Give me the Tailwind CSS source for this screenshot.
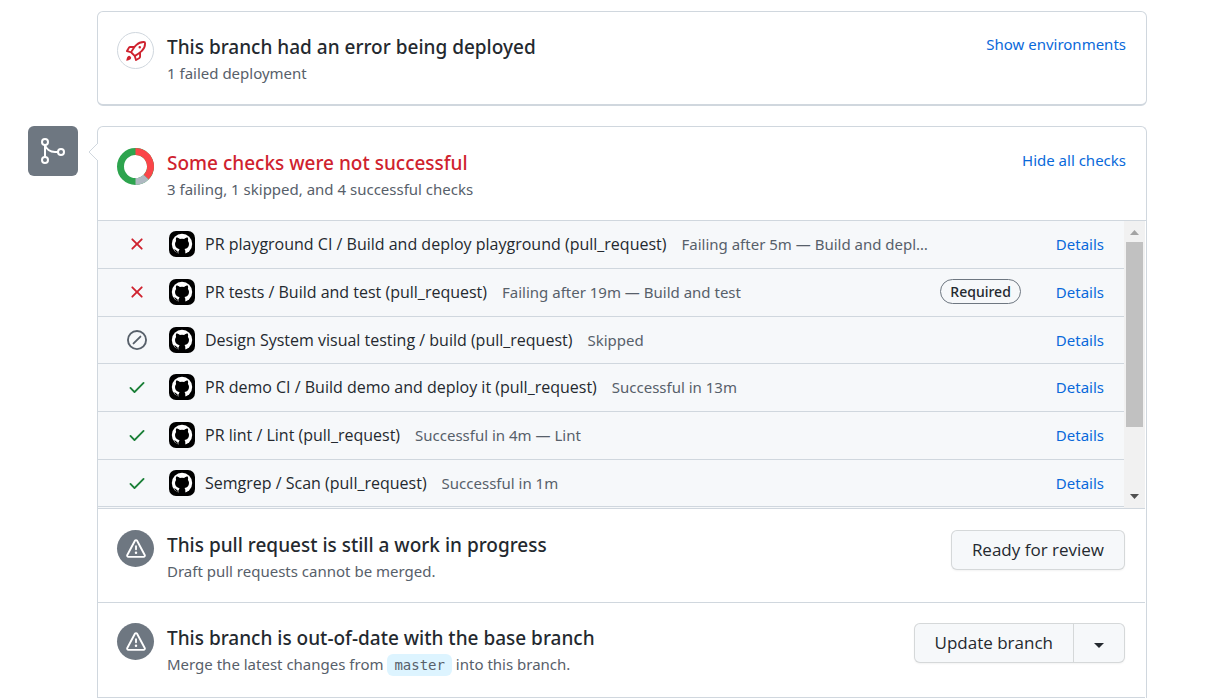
<!DOCTYPE html>
<html lang="en">
<head>
<meta charset="utf-8">
<meta name="viewport" content="width=device-width, initial-scale=1">
<title>Pull request checks</title>
<script src="https://cdn.jsdelivr.net/npm/@tailwindcss/browser@4"></script>
</head>
<body class="bg-white font-['Noto_Sans','Open_Sans',sans-serif] text-[15px] leading-6 text-[#24292f]">
<svg class="hidden" aria-hidden="true">
  <symbol id="x" viewBox="0 0 16 16"><path d="M3.72 3.72a.75.75 0 011.06 0L8 6.94l3.22-3.22a.75.75 0 111.06 1.06L9.06 8l3.22 3.22a.75.75 0 11-1.06 1.06L8 9.06l-3.22 3.22a.75.75 0 01-1.06-1.06L6.94 8 3.72 4.78a.75.75 0 010-1.06z"/></symbol>
  <symbol id="check" viewBox="0 0 16 16"><path d="M13.78 4.22a.75.75 0 010 1.06l-7.25 7.25a.75.75 0 01-1.06 0L2.22 9.28a.75.75 0 011.06-1.06L6 10.94l6.72-6.72a.75.75 0 011.06 0z"/></symbol>
  <symbol id="skip" viewBox="0 0 16 16"><path fill-rule="evenodd" d="M1.5 8a6.5 6.5 0 1113 0 6.5 6.5 0 01-13 0zM8 0a8 8 0 100 16A8 8 0 008 0zm3.28 5.78a.75.75 0 00-1.06-1.06l-5.5 5.5a.75.75 0 101.06 1.06l5.5-5.5z"/></symbol>
  <symbol id="alert" viewBox="0 0 16 16"><path fill-rule="evenodd" d="M8.22 1.754a.25.25 0 00-.44 0L1.698 13.132a.25.25 0 00.22.368h12.164a.25.25 0 00.22-.368L8.22 1.754zm-1.763-.707c.659-1.234 2.427-1.234 3.086 0l6.082 11.378A1.75 1.75 0 0114.082 15H1.918a1.75 1.75 0 01-1.543-2.575L6.457 1.047zM9 11a1 1 0 11-2 0 1 1 0 012 0zm-.25-5.25a.75.75 0 00-1.5 0v2.5a.75.75 0 001.5 0v-2.5z"/></symbol>
  <symbol id="avatar" viewBox="0 0 26 26"><rect width="26" height="26" rx="7" fill="#000"/><circle cx="13" cy="13" r="10.2" fill="#fff"/><path d="M7.3 6.6c1.4 0 2.5.6 3.5 1.3a11 11 0 014.4 0c1-.7 2.1-1.3 3.5-1.3.6 1.3.5 2.4.2 3.3.8 1 1.1 2 1.1 3.2 0 3.300-1.800 4.600-4.500 5 .6.6.8 1.300.8 2.200v3.200a10.200 10.200 0 01-6.600 0v-1.900c-2.200.4-2.900-.4-3.500-1.600-.3-.5-.7-.9-1.200-1.300 1.500-.4 2.200.6 2.800 1.400.5.6 1.100.7 2 .4.100-.9.300-1.700.8-2.300-2.700-.5-4.600-1.800-4.600-5.100 0-1.200.4-2.300 1.100-3.200-.3-.9-.4-2 .2-3.300z" fill="#000"/></symbol>
</svg>
<main class="pt-[11px] pr-[59px] pl-7">
  <section class="ml-[69px] flex items-start rounded-md border border-b-2 border-[#d0d7de] px-5 pt-5 pb-[13px] pl-[19px]">
    <span class="grid size-[37px] shrink-0 place-items-center rounded-full border border-[#d0d7de]">
      <svg class="size-5 fill-[#cf222e]" viewBox="0 0 16 16" aria-hidden="true"><path fill-rule="evenodd" d="M14.064 0a8.75 8.75 0 00-6.187 2.563l-.459.458c-.314.314-.616.641-.904.979H3.31a1.75 1.75 0 00-1.49.833L.11 7.607a.75.75 0 00.418 1.11l3.102.954c.037.051.079.1.124.145l2.429 2.428c.046.046.094.088.145.125l.954 3.102a.75.75 0 001.11.418l2.774-1.707a1.75 1.75 0 00.833-1.49V9.485c.338-.288.665-.59.979-.904l.458-.459A8.75 8.75 0 0016 1.936V1.75A1.75 1.75 0 0014.25 0h-.186zM10.5 10.625c-.088.06-.177.118-.266.175l-2.35 1.521.548 1.783 1.949-1.2a.25.25 0 00.119-.213v-2.066zM3.678 8.116L5.2 5.766c.058-.09.117-.178.176-.266H3.309a.25.25 0 00-.213.119l-1.2 1.95 1.782.547zm5.26-4.493A7.25 7.25 0 0114.063 1.5h.186a.25.25 0 01.25.25v.186a7.25 7.25 0 01-2.123 5.127l-.459.458a15.21 15.21 0 01-2.499 2.02l-2.317 1.5-2.143-2.143 1.5-2.317a15.25 15.25 0 012.02-2.5l.458-.458h.002zM12 5a1 1 0 11-2 0 1 1 0 012 0zm-8.44 9.56a1.5 1.5 0 10-2.12-2.12c-.734.73-1.047 2.332-1.15 3.003a.23.23 0 00.265.265c.671-.103 2.273-.416 3.005-1.148z"/></svg>
    </span>
    <div class="ml-[13px] flex-1 pt-0.5 pb-1">
      <h3 class="text-[19px] leading-[26px] font-medium">This branch had an error being deployed</h3>
      <p class="pb-px leading-[26px] text-[#57606a]">1 failed deployment</p>
    </div>
    <a href="#" class="text-[#0969da]">Show environments</a>
  </section>

  <div class="mt-5 flex items-start">
    <span class="grid size-[50px] shrink-0 place-items-center rounded-md bg-[#6e7781]">
      <svg class="size-7 fill-none stroke-white stroke-2" viewBox="0 0 28 28" aria-hidden="true"><circle cx="6" cy="5" r="3"/><circle cx="6" cy="23" r="3"/><circle cx="22" cy="15" r="3"/><path d="M6 8v12M6 8c1 4 5 7 10 7h3"/></svg>
    </span>
    <section class="relative ml-[19px] min-w-0 flex-1 rounded-t-md border border-b-0 border-[#d0d7de]">
      <svg class="absolute top-4 -left-[10px] h-[18px] w-[10px]" viewBox="0 0 10 18" aria-hidden="true"><path d="M10 0L1 9l9 9" fill="#fff" stroke="#d0d7de"/></svg>
      <div class="flex items-start border-b border-[#d0d7de] px-5 pt-5 pb-[18px] pl-[19px]">
        <svg class="mt-px size-[37px] shrink-0 fill-none stroke-[7px]" viewBox="0 0 37 37" role="img" aria-label="Check results">
          <circle class="stroke-[#2da44e]" cx="18.5" cy="18.5" r="15"/>
          <path class="stroke-[#fa4549]" d="M18.5 3.5A15 15 0 0129.1 29.1"/>
          <path class="stroke-[#afb8c1]" d="M29.1 29.1A15 15 0 0118.5 33.5"/>
        </svg>
        <div class="ml-[13px] flex-1 pt-[3px] pb-0">
          <h3 class="text-[19px] leading-[26px] font-medium text-[#cf222e]">Some checks were not successful</h3>
          <p class="leading-[26px] text-[#57606a]">3 failing, 1 skipped, and 4 successful checks</p>
        </div>
        <button type="button" class="pt-px text-[#0969da]">Hide all checks</button>
      </div>

      <div class="flex border-b border-[#d0d7de] bg-[#f6f8fa] pb-px mr-px">
        <ul class="grid min-w-0 flex-1 grid-rows-[48px_48px_47px_48px_48px_47px]">
          <li class="flex items-center border-b border-[#d0d7de] pr-5 pb-0.5 pl-[29px]">
            <svg class="size-5 shrink-0 fill-[#cf222e]" role="img" aria-label="Failed"><use href="#x"/></svg>
            <svg class="ml-[22px] size-[26px] shrink-0" aria-hidden="true"><use href="#avatar"/></svg>
            <strong class="ml-[10px] shrink-0 font-['Open_Sans',sans-serif] text-base font-medium">PR playground CI / Build and deploy playground (pull_request)</strong>
            <span class="ml-[15px] truncate text-[#57606a]">Failing after 5m — Build and depl…</span>
            <a href="#" class="ml-auto text-[#0969da]">Details</a>
          </li>
          <li class="flex items-center border-b border-[#d0d7de] pr-5 pb-0.5 pl-[29px]">
            <svg class="size-5 shrink-0 fill-[#cf222e]" role="img" aria-label="Failed"><use href="#x"/></svg>
            <svg class="ml-[22px] size-[26px] shrink-0" aria-hidden="true"><use href="#avatar"/></svg>
            <strong class="ml-[10px] shrink-0 font-['Open_Sans',sans-serif] text-base font-medium">PR tests / Build and test (pull_request)</strong>
            <span class="ml-[15px] truncate text-[#57606a]">Failing after 19m — Build and test</span>
            <span class="mr-[35px] ml-auto rounded-full border border-[#6e7781] px-[9px] text-sm leading-[23px] font-medium">Required</span>
            <a href="#" class="text-[#0969da]">Details</a>
          </li>
          <li class="flex items-center border-b border-[#d0d7de] pr-5 pl-[29px]">
            <svg class="size-5 shrink-0 fill-[#57606a]" role="img" aria-label="Skipped"><use href="#skip"/></svg>
            <svg class="ml-[22px] size-[26px] shrink-0" aria-hidden="true"><use href="#avatar"/></svg>
            <strong class="ml-[10px] shrink-0 font-['Open_Sans',sans-serif] text-base font-medium">Design System visual testing / build (pull_request)</strong>
            <span class="ml-[15px] truncate text-[#57606a]">Skipped</span>
            <a href="#" class="ml-auto text-[#0969da]">Details</a>
          </li>
          <li class="flex items-center border-b border-[#d0d7de] pr-5 pb-0.5 pl-[29px]">
            <svg class="size-5 shrink-0 fill-[#1a7f37]" role="img" aria-label="Passed"><use href="#check"/></svg>
            <svg class="ml-[22px] size-[26px] shrink-0" aria-hidden="true"><use href="#avatar"/></svg>
            <strong class="ml-[10px] shrink-0 font-['Open_Sans',sans-serif] text-base font-medium">PR demo CI / Build demo and deploy it (pull_request)</strong>
            <span class="ml-[15px] truncate text-[#57606a]">Successful in 13m</span>
            <a href="#" class="ml-auto text-[#0969da]">Details</a>
          </li>
          <li class="flex items-center border-b border-[#d0d7de] pr-5 pb-0.5 pl-[29px]">
            <svg class="size-5 shrink-0 fill-[#1a7f37]" role="img" aria-label="Passed"><use href="#check"/></svg>
            <svg class="ml-[22px] size-[26px] shrink-0" aria-hidden="true"><use href="#avatar"/></svg>
            <strong class="ml-[10px] shrink-0 font-['Open_Sans',sans-serif] text-base font-medium">PR lint / Lint (pull_request)</strong>
            <span class="ml-[15px] truncate text-[#57606a]">Successful in 4m — Lint</span>
            <a href="#" class="ml-auto text-[#0969da]">Details</a>
          </li>
          <li class="flex items-center border-b border-[#d0d7de] pr-5 pl-[29px]">
            <svg class="size-5 shrink-0 fill-[#1a7f37]" role="img" aria-label="Passed"><use href="#check"/></svg>
            <svg class="ml-[22px] size-[26px] shrink-0" aria-hidden="true"><use href="#avatar"/></svg>
            <strong class="ml-[10px] shrink-0 font-['Open_Sans',sans-serif] text-base font-medium">Semgrep / Scan (pull_request)</strong>
            <span class="ml-[15px] truncate text-[#57606a]">Successful in 1m</span>
            <a href="#" class="ml-auto text-[#0969da]">Details</a>
          </li>
        </ul>
        <div class="-mb-px flex w-[21px] flex-col items-center bg-[#f1f1f1]" aria-hidden="true">
          <svg class="h-[21px] w-[9px] shrink-0 fill-[#a3a3a3]" viewBox="0 0 9 21"><path d="M0 14L4.5 9 9 14z"/></svg>
          <div class="h-[185px] w-[17px] bg-[#c1c1c1]"></div>
          <svg class="mt-auto h-[21px] w-[9px] shrink-0 fill-[#505050]" viewBox="0 0 9 21"><path d="M0 7l4.5 5L9 7z"/></svg>
        </div>
      </div>

      <div class="mr-px flex items-start border-b border-[#d0d7de] pt-[21px] pr-5 pb-[17px] pl-[19px]">
        <span class="grid size-[37px] shrink-0 place-items-center rounded-full bg-[#6e7781]"><svg class="size-5 fill-white" aria-hidden="true"><use href="#alert"/></svg></span>
        <div class="ml-[13px] flex-1 pt-0.5">
          <h3 class="text-[19px] leading-[26px] font-medium">This pull request is still a work in progress</h3>
          <p class="pb-px leading-[26px] text-[#57606a]">Draft pull requests cannot be merged.</p>
        </div>
        <button type="button" class="h-10 rounded-md border border-[#1b1f24]/15 bg-[#f6f8fa] px-5 font-['Open_Sans',sans-serif] text-[17px] font-medium shadow-xs">Ready for review</button>
      </div>

      <div class="mr-px flex items-start border-b border-[#d0d7de] pt-5 pr-5 pb-[18px] pl-[19px]">
        <span class="grid size-[37px] shrink-0 place-items-center rounded-full bg-[#6e7781]"><svg class="size-5 fill-white" aria-hidden="true"><use href="#alert"/></svg></span>
        <div class="ml-[13px] flex-1 pt-0.5 pb-0.5">
          <h3 class="text-[19px] leading-[26px] font-medium">This branch is out-of-date with the base branch</h3>
          <p class="leading-[26px] text-[#57606a]">Merge the latest changes from <code class="rounded-md bg-[#ddf4ff] px-[7px] py-[3px] font-['DejaVu_Sans_Mono',monospace] text-sm">master</code> into this branch.</p>
        </div>
        <div class="flex h-10 rounded-md border border-[#1b1f24]/15 bg-[#f6f8fa] font-['Open_Sans',sans-serif] text-[17px] font-medium shadow-xs">
          <button type="button" class="px-5">Update branch</button>
          <button type="button" class="grid w-[51px] place-items-center border-l border-[#1b1f24]/15" aria-label="Update options"><svg class="mt-1 h-[5px] w-[10px] fill-[#24292f]" viewBox="0 0 10 5" aria-hidden="true"><path d="M0 0h10L5 5z"/></svg></button>
        </div>
      </div>
    </section>
  </div>
</main>
</body>
</html>
